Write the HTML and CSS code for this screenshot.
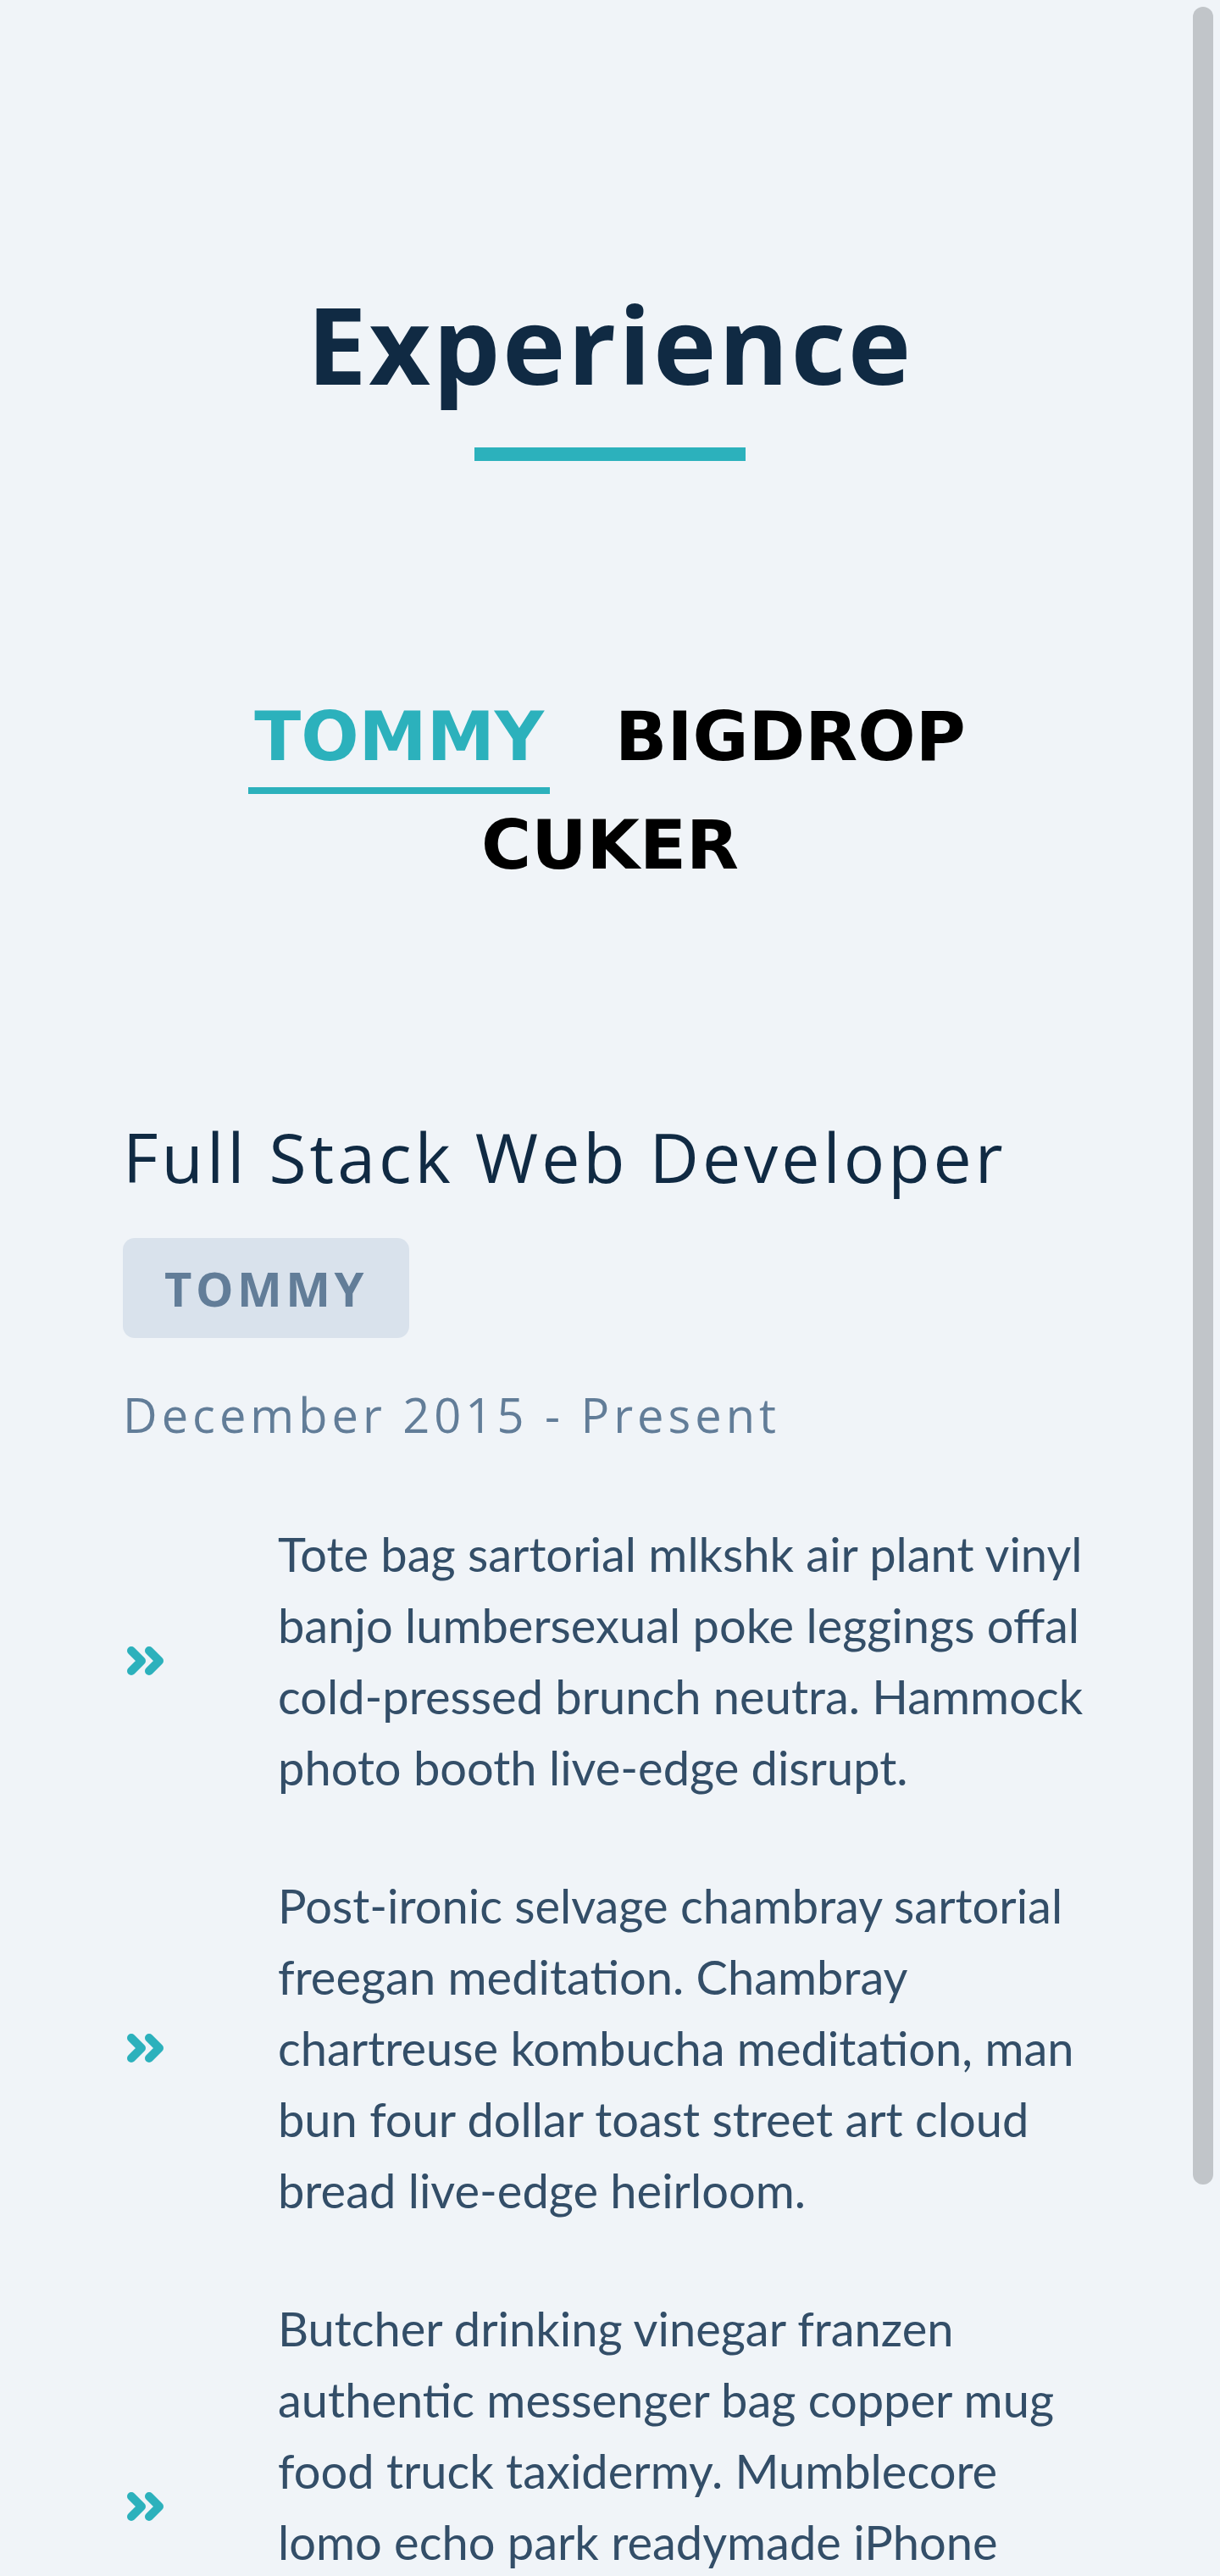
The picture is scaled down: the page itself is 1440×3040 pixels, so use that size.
FILE: index.html
```html
<!DOCTYPE html>
<html lang="en">
<head>
<meta charset="utf-8">
<title>Experience</title>
<link rel="stylesheet" href="styles.css">
</head>
<body>
<section class="experience">
  <h2 class="section-title">Experience</h2>
  <div class="title-bar"></div>

  <nav class="tabs">
    <button class="tab is-active">TOMMY</button>
    <button class="tab">BIGDROP</button>
    <button class="tab">CUKER</button>
  </nav>

  <article class="job">
    <h3 class="job-title">Full Stack Web Developer</h3>
    <span class="company-badge">TOMMY</span>
    <p class="job-dates">December 2015 - Present</p>

    <ul class="duties">
      <li class="duty">
        <svg class="duty-icon" viewBox="0 0 44 34" width="44" height="34" aria-hidden="true">
          <polyline points="5,5 17,17 5,29"/>
          <polyline points="26,5 38,17 26,29"/>
        </svg>
        <p class="duty-text">Tote bag sartorial mlkshk air plant vinyl banjo lumbersexual poke leggings offal cold-pressed brunch neutra. Hammock photo booth live-edge disrupt.</p>
      </li>
      <li class="duty">
        <svg class="duty-icon" viewBox="0 0 44 34" width="44" height="34" aria-hidden="true">
          <polyline points="5,5 17,17 5,29"/>
          <polyline points="26,5 38,17 26,29"/>
        </svg>
        <p class="duty-text">Post-ironic selvage chambray sartorial freegan meditation. Chambray chartreuse kombucha meditation, man bun four dollar toast street art cloud bread live-edge heirloom.</p>
      </li>
      <li class="duty">
        <svg class="duty-icon" viewBox="0 0 44 34" width="44" height="34" aria-hidden="true">
          <polyline points="5,5 17,17 5,29"/>
          <polyline points="26,5 38,17 26,29"/>
        </svg>
        <p class="duty-text">Butcher drinking vinegar franzen authentic messenger bag copper mug food truck taxidermy. Mumblecore lomo echo park readymade iPhone migas single-origin coffee franzen cloud bread tilde vegan flexitarian.</p>
      </li>
    </ul>
  </article>
</section>
<div class="scroll-thumb"></div>
</body>
</html>
```
FILE: styles.css
```css
* {
  box-sizing: border-box;
}

html {
  overflow: hidden;
}

html,
body {
  margin: 0;
  padding: 0;
}

body {
  background: #f0f4f8;
  color: #334e68;
  font-family: Lato, "Open Sans", sans-serif;
}

.experience {
  width: 1150px;
  margin: 0 auto;
  padding-top: 330px;
}

.section-title {
  margin: 0;
  text-align: center;
  font-family: "Open Sans", "Noto Sans", sans-serif;
  font-weight: 700;
  font-size: 126px;
  line-height: 151px;
  letter-spacing: 2.6px;
  color: #102a43;
}

.title-bar {
  width: 320px;
  height: 16px;
  margin: 47px auto 0;
  background: #2cb1bc;
}

.tabs {
  display: flex;
  flex-wrap: wrap;
  justify-content: center;
  column-gap: 70px;
  row-gap: 20px;
  margin-top: 285px;
}

.tab {
  appearance: none;
  margin: 0;
  padding: 0 7px 19px;
  border: 0;
  border-bottom: 8px solid transparent;
  background: none;
  font-family: "DejaVu Sans", sans-serif;
  font-weight: 700;
  font-size: 80.5px;
  line-height: 80.5px;
  color: #000;
  cursor: pointer;
}

.tab.is-active {
  color: #2cb1bc;
  border-bottom-color: #2cb1bc;
}

.job {
  margin-top: 253px;
}

.job-title {
  margin: 0;
  font-family: "Open Sans", "Noto Sans", sans-serif;
  font-weight: 400;
  font-size: 80.5px;
  line-height: 96.6px;
  letter-spacing: 4px;
  color: #102a43;
}

.company-badge {
  display: inline-block;
  margin-top: 47px;
  padding: 21px 49px;
  border-radius: 14px;
  background: #d9e2ec;
  font-family: "Open Sans", "Noto Sans", sans-serif;
  font-weight: 700;
  font-size: 56px;
  line-height: 76px;
  letter-spacing: 4.5px;
  color: #627d98;
}

.job-dates {
  margin: 48px 0 0;
  font-family: "Open Sans", "Noto Sans", sans-serif;
  font-size: 56px;
  line-height: 84px;
  letter-spacing: 5px;
  color: #627d98;
}

.duties {
  list-style: none;
  margin: 81px 0 0;
  padding: 0;
}

.duty {
  display: grid;
  grid-template-columns: 183px 1fr;
  align-items: center;
  margin-bottom: 79px;
}

.duty-icon {
  display: block;
  margin-left: 5px;
  fill: none;
  stroke: #2cb1bc;
  stroke-width: 10;
  stroke-linecap: round;
  stroke-linejoin: round;
}

.duty-text {
  margin: 0;
  font-size: 56px;
  line-height: 84px;
  color: #334e68;
}

.scroll-thumb {
  position: fixed;
  top: 8px;
  right: 8px;
  width: 24px;
  height: 2570px;
  border-radius: 12px;
  background: #c1c5c9;
}
```
